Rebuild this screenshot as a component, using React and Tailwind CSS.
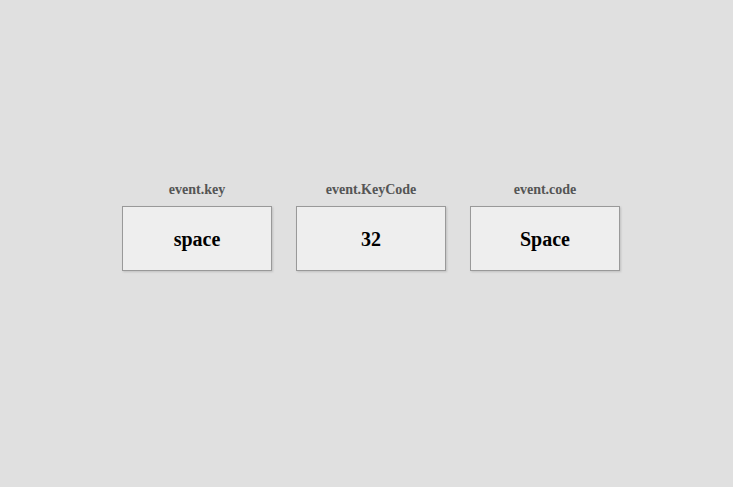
import React from "react";

const items = [
  { label: "event.key", value: "space" },
  { label: "event.KeyCode", value: "32" },
  { label: "event.code", value: "Space" },
];

export default function App() {
  return (
    <div className="w-[733px] h-[487px] bg-[#e0e0e0] font-['Liberation_Serif',serif]">
      <div className="flex gap-6 pl-[122px] pt-[182px]">
        {items.map((item) => (
          <div key={item.label} className="flex flex-col items-center">
            <div className="text-[14px] leading-4 font-bold text-[#555] mb-[8px]">
              {item.label}
            </div>
            <div className="w-[150px] h-[65px] flex items-center justify-center bg-[#eeeeee] border border-[#999] shadow-[1px_1px_2px_rgba(0,0,0,0.15)] text-[20px] font-bold text-black">
              {item.value}
            </div>
          </div>
        ))}
      </div>
    </div>
  );
}
